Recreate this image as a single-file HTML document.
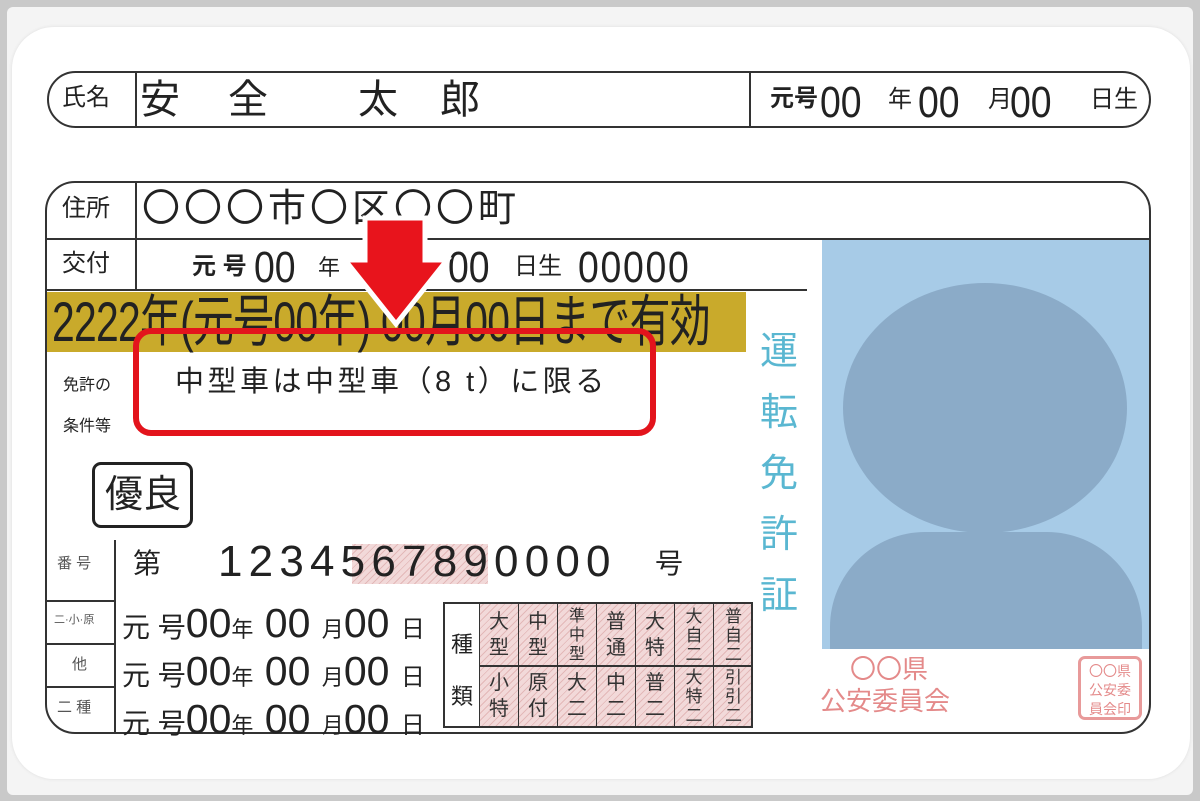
<!DOCTYPE html>
<html><head><meta charset="utf-8">
<style>
*{margin:0;padding:0;box-sizing:border-box}
body{width:1200px;height:801px;background:#c9c9c9;position:relative;overflow:hidden;font-family:"Liberation Sans","Noto Sans CJK JP",sans-serif;color:#222}
.a{position:absolute;white-space:nowrap;line-height:1}
.panel{position:absolute;left:7px;top:7px;width:1186px;height:788px;background:#f4f4f4;border-radius:6px}
.card{position:absolute;left:12px;top:27px;width:1178px;height:752px;background:#fff;border-radius:42px;box-shadow:0 0 3px #ddd}
.ln{position:absolute;background:#333}
.hatch{background:repeating-linear-gradient(135deg,#f2d9d9 0 2px,#e3b8b8 2px 3px,#f2d9d9 3px 5px)}
.cell{position:absolute;width:39px;height:62px;border-right:1.5px solid #333;font-size:20px;line-height:26px;text-align:center;padding-top:5px;color:#333}
.d{font-size:44px;transform:scaleX(0.85);transform-origin:left top}
</style></head><body>
<div class="panel"></div>
<div class="card"></div>

<div class="a" style="left:47px;top:71px;width:1104px;height:57px;border:2px solid #333;border-radius:29px"></div>
<div class="ln" style="left:135px;top:71px;width:2px;height:57px"></div>
<div class="ln" style="left:749px;top:71px;width:2px;height:57px"></div>
<div class="a" style="left:62px;top:86px;font-size:24px">氏名</div>
<div class="a" style="left:140px;top:80px;font-size:40px">安</div>
<div class="a" style="left:228px;top:80px;font-size:40px">全</div>
<div class="a" style="left:358px;top:80px;font-size:40px">太</div>
<div class="a" style="left:440px;top:80px;font-size:40px">郎</div>
<div class="a" style="left:770px;top:87px;font-size:24px;font-weight:bold">元号</div>
<div class="a d" style="left:820px;top:81px">00</div>
<div class="a" style="left:888px;top:88px;font-size:24px">年</div>
<div class="a d" style="left:918px;top:81px">00</div>
<div class="a" style="left:988px;top:88px;font-size:24px">月</div>
<div class="a d" style="left:1010px;top:81px">00</div>
<div class="a" style="left:1090px;top:88px;font-size:24px">日生</div>

<div class="a" style="left:45px;top:181px;width:1106px;height:553px;border:2px solid #333;border-radius:30px"></div>
<div class="ln" style="left:45px;top:238px;width:1106px;height:2px"></div>
<div class="ln" style="left:135px;top:181px;width:2px;height:110px"></div>
<div class="ln" style="left:45px;top:289px;width:762px;height:2px"></div>
<div class="a" style="left:62px;top:197px;font-size:24px">住所</div>
<div class="a" style="left:142px;top:190px;font-size:38px;letter-spacing:4px">〇〇〇市〇区〇〇町</div>
<div class="a" style="left:62px;top:252px;font-size:24px">交付</div>
<div class="a" style="left:192px;top:255px;font-size:24px;font-weight:bold">元 号</div>
<div class="a d" style="left:254px;top:246px">00</div>
<div class="a" style="left:318px;top:257px;font-size:22px">年</div>
<div class="a d" style="left:448px;top:246px">00</div>
<div class="a" style="left:514px;top:255px;font-size:24px">日生</div>
<div class="a d" style="left:578px;top:246px;letter-spacing:2px">00000</div>

<div class="a" style="left:822px;top:240px;width:327px;height:409px;background:#a7cbe7;overflow:hidden">
  <div class="a" style="left:21px;top:43px;width:284px;height:250px;border-radius:50%;background:#8babc8"></div>
  <div class="a" style="left:8px;top:292px;width:312px;height:140px;border-radius:95px 95px 0 0;background:#8babc8"></div>
</div>

<div class="a" style="left:47px;top:292px;width:699px;height:60px;background:#c9aa2b"></div>
<div class="a" style="left:52px;top:294px;font-size:56px;transform:scaleX(0.73);transform-origin:left top;letter-spacing:-1px">2222年(元号00年) 00月00日まで有効</div>

<div class="a" style="left:760px;top:322px;font-size:38px;line-height:61px;color:#5ab7d1;width:44px;white-space:normal">運転免許証</div>

<div class="a" style="left:63px;top:378px;font-size:16px">免許の</div>
<div class="a" style="left:63px;top:419px;font-size:16px">条件等</div>
<div class="a" style="left:175px;top:368px;font-size:29px;letter-spacing:3.5px">中型車は中型車（8 t）に限る</div>
<div class="a" style="left:133px;top:328px;width:523px;height:108px;border:6px solid #e3141c;border-radius:18px"></div>

<svg class="a" style="left:338px;top:214px" width="116" height="116" viewBox="0 0 116 116">
<path d="M27 4 H87 V46 H109 L58 110 L7 46 H27 Z" fill="#e8141c" stroke="#fff" stroke-width="5" stroke-linejoin="miter"/>
</svg>

<div class="a" style="left:92px;top:462px;width:101px;height:66px;border:3px solid #222;border-radius:9px;font-size:38px;padding:11px 0 0 10px">優良</div>

<div class="ln" style="left:114px;top:540px;width:2px;height:194px"></div>
<div class="ln" style="left:45px;top:600px;width:70px;height:2px"></div>
<div class="ln" style="left:45px;top:643px;width:70px;height:2px"></div>
<div class="ln" style="left:45px;top:686px;width:70px;height:2px"></div>
<div class="a" style="left:57px;top:556px;font-size:15px;color:#555">番 号</div>
<div class="a" style="left:54px;top:615px;font-size:11px;color:#555">二·小·原</div>
<div class="a" style="left:72px;top:657px;font-size:15px;color:#555">他</div>
<div class="a" style="left:57px;top:700px;font-size:15px;color:#555">二 種</div>
<div class="a" style="left:133px;top:550px;font-size:28px">第</div>
<div class="a hatch" style="left:352px;top:544px;width:136px;height:40px"></div>
<div class="a" style="left:218px;top:540px;font-size:44px;letter-spacing:6.2px">1234567890000</div>
<div class="a" style="left:655px;top:550px;font-size:28px">号</div>

<div class="a" style="left:122px;top:603px;font-size:41px;line-height:41px">
<div><span style="font-size:28px">元 号</span>00<span style="font-size:22px">年</span> 00 <span style="font-size:22px">月</span>00 <span style="font-size:24px">日</span></div>
<div style="margin-top:1px"><span style="font-size:28px">元 号</span>00<span style="font-size:22px">年</span> 00 <span style="font-size:22px">月</span>00 <span style="font-size:24px">日</span></div>
<div style="margin-top:1px"><span style="font-size:28px">元 号</span>00<span style="font-size:22px">年</span> 00 <span style="font-size:22px">月</span>00 <span style="font-size:24px">日</span></div>
</div>

<div class="a" style="left:443px;top:602px;width:310px;height:126px;border:2px solid #333;background:#fff">
  <div class="a" style="left:0;top:0;width:35px;height:122px;border-right:1.5px solid #333;font-size:22px;text-align:center;padding-top:15px;line-height:52px;white-space:normal">種類</div>
  <div class="a hatch" style="left:35px;top:0;width:271px;height:122px"></div>
  <div class="ln" style="left:35px;top:61px;width:271px;height:1.5px"></div>
  <div class="cell" style="left:35px;top:0">大<br>型</div>
  <div class="cell" style="left:74px;top:0">中<br>型</div>
  <div class="cell" style="left:113px;top:0;font-size:16px;line-height:19px;padding-top:3px">準<br>中<br>型</div>
  <div class="cell" style="left:152px;top:0">普<br>通</div>
  <div class="cell" style="left:191px;top:0">大<br>特</div>
  <div class="cell" style="left:230px;top:0;font-size:17px;line-height:19px;padding-top:3px">大<br>自<br>二</div>
  <div class="cell" style="left:269px;top:0;border-right:0;font-size:17px;line-height:19px;padding-top:3px">普<br>自<br>二</div>
  <div class="cell" style="left:35px;top:61px">小<br>特</div>
  <div class="cell" style="left:74px;top:61px">原<br>付</div>
  <div class="cell" style="left:113px;top:61px">大<br>二</div>
  <div class="cell" style="left:152px;top:61px">中<br>二</div>
  <div class="cell" style="left:191px;top:61px">普<br>二</div>
  <div class="cell" style="left:230px;top:61px;font-size:17px;line-height:19px;padding-top:3px">大<br>特<br>二</div>
  <div class="cell" style="left:269px;top:61px;border-right:0;font-size:17px;line-height:19px;padding-top:3px">引<br>引<br>二</div>
</div>

<div class="a" style="left:850px;top:656px;font-size:26px;color:#e48a8a">〇〇県</div>
<div class="a" style="left:820px;top:688px;font-size:26px;color:#e48a8a">公安委員会</div>
<div class="a" style="left:1078px;top:656px;width:64px;height:64px;border:3px solid #e89a9a;border-radius:7px;font-size:14px;line-height:19px;color:#e48a8a;padding:3px 2px;white-space:normal;text-align:center">〇〇県<br>公安委<br>員会印</div>
</body></html>
